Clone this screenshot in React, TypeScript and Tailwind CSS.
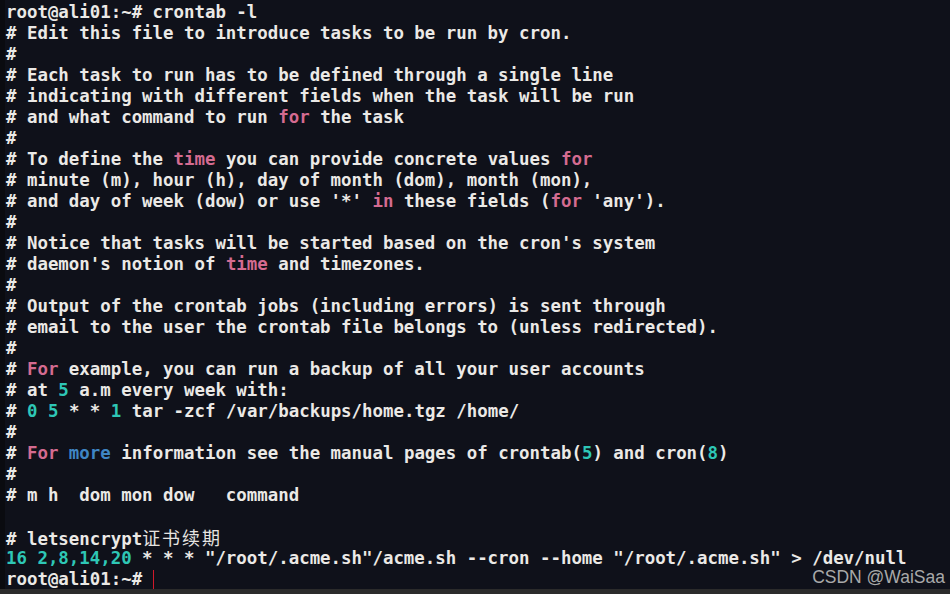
import React from "react";

type Seg = [string, string?];

const P = "text-[#d46b90]";
const T = "text-[#2ec7b6]";
const B = "text-[#3f86c4]";

const lines: Seg[][] = [
  [["root@ali01:~# crontab -l"]],
  [["# Edit this file to introduce tasks to be run by cron."]],
  [["#"]],
  [["# Each task to run has to be defined through a single line"]],
  [["# indicating with different fields when the task will be run"]],
  [["# and what command to run "], ["for", P], [" the task"]],
  [["#"]],
  [["# To define the "], ["time", P], [" you can provide concrete values "], ["for", P]],
  [["# minute (m), hour (h), day of month (dom), month (mon),"]],
  [["# and day of week (dow) or use '*' "], ["in", P], [" these fields ("], ["for", P], [" 'any')."]],
  [["#"]],
  [["# Notice that tasks will be started based on the cron's system"]],
  [["# daemon's notion of "], ["time", P], [" and timezones."]],
  [["#"]],
  [["# Output of the crontab jobs (including errors) is sent through"]],
  [["# email to the user the crontab file belongs to (unless redirected)."]],
  [["#"]],
  [["# "], ["For", P], [" example, you can run a backup of all your user accounts"]],
  [["# at "], ["5", T], [" a.m every week with:"]],
  [["# "], ["0", T], [" "], ["5", T], [" * * "], ["1", T], [" tar -zcf /var/backups/home.tgz /home/"]],
  [["#"]],
  [["# "], ["For", P], [" "], ["more", B], [" information see the manual pages of crontab("], ["5", T], [") and cron("], ["8", T], [")"]],
  [["#"]],
  [["# m h  dom mon dow   command"]],
  [[""]],
  [["# letsencrypt"], ["证书续期", "cjk"]],
  [["16 2,8,14,20", T], [' * * * "/root/.acme.sh"/acme.sh --cron --home "/root/.acme.sh" > /dev/null']],
];

export default function App() {
  return (
    <div className="relative w-[950px] h-[594px] bg-[#0f111a] flex flex-col overflow-hidden">
      <div className="flex flex-1 min-h-0 overflow-hidden">
        <div className="w-[5px] bg-[#0a0b10]" />
        <div
          className="flex-1 pl-[1px] pt-[2px] text-[#ebe9e6] font-bold text-[17.4px] leading-[21px] whitespace-pre"
          style={{ fontFamily: '"DejaVu Sans Mono", "Noto Sans CJK SC", monospace' }}
        >
          {lines.map((segs, i) => (
            <div key={i} className="h-[21px]">
              {segs.map(([t, c], j) =>
                c === "cjk" ? (
                  <span
                    key={j}
                    className="font-normal text-[18px] leading-[21px] tracking-[2px] text-[#e6e4e1]"
                    style={{ fontFamily: '"Noto Sans CJK SC", sans-serif' }}
                  >
                    {t}
                  </span>
                ) : (
                  <span key={j} className={c ?? ""}>
                    {t}
                  </span>
                )
              )}
            </div>
          ))}
          <div className="h-[21px] flex items-center">
            <span>root@ali01:~# </span>
            <span className="w-[1px] h-[19px] bg-[#d0192a]" />
          </div>
        </div>
      </div>
      <div className="h-[5px] bg-[#2b2b2b]" />
      <div
        className="absolute right-[5px] bottom-[7px] text-[17.5px] leading-[20px] text-[#a9a9a9]"
        style={{ fontFamily: '"Liberation Sans", Arial, sans-serif' }}
      >
        CSDN @WaiSaa
      </div>
    </div>
  );
}
